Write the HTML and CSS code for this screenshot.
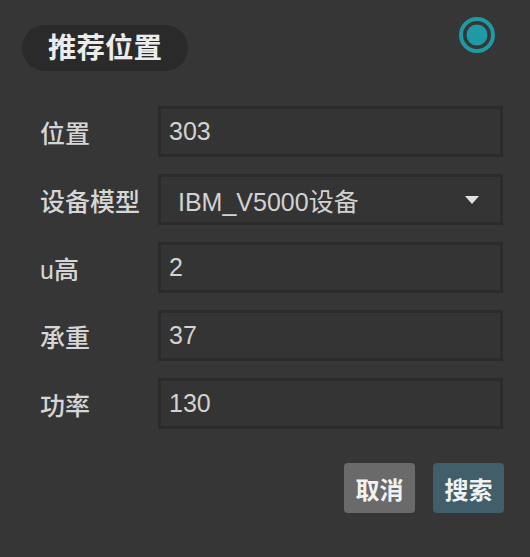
FILE: index.html
```html
<!DOCTYPE html>
<html lang="zh">
<head>
<meta charset="utf-8">
<title>推荐位置</title>
<link rel="stylesheet" href="styles.css">
</head>
<body>
<div class="panel">
  <div class="header">
    <div class="title">推荐位置</div>
    <svg class="status" width="36" height="36" viewBox="0 0 36 36" aria-hidden="true">
      <circle cx="18" cy="18" r="16" fill="none" stroke="#1f9aa5" stroke-width="4"/>
      <circle cx="18" cy="18" r="10.5" fill="#1f9aa5"/>
    </svg>
  </div>
  <div class="form">
    <label class="label">位置</label>
    <input class="field" type="text" value="303">
    <label class="label">设备模型</label>
    <div class="field select">
      <span>IBM_V5000设备</span>
      <span class="caret"></span>
    </div>
    <label class="label">u高</label>
    <input class="field" type="text" value="2">
    <label class="label">承重</label>
    <input class="field" type="text" value="37">
    <label class="label">功率</label>
    <input class="field" type="text" value="130">
  </div>
  <div class="actions">
    <button class="btn btn-cancel" type="button">取消</button>
    <button class="btn btn-search" type="button">搜索</button>
  </div>
</div>
</body>
</html>
```

FILE: styles.css
```css
html, body {
  margin: 0;
  padding: 0;
  background: #363636;
}
body {
  font-family: "Liberation Sans", "Noto Sans CJK SC", sans-serif;
  color: #d4d4d4;
  width: 530px;
  height: 557px;
  overflow: hidden;
}
.panel {
  padding: 17px 26px 0 22px;
}
.header {
  display: flex;
  justify-content: space-between;
  align-items: flex-start;
  padding-right: 9px;
}
.title {
  margin-top: 8px;
  height: 46px;
  line-height: 46px;
  padding: 0 26px;
  border-radius: 23px;
  background: #2a2a2a;
  color: #ececec;
  font-size: 28.5px;
  font-weight: bold;
}
.status {
  display: block;
}
.form {
  margin-top: 35px;
  padding-left: 18px;
  padding-right: 1px;
  display: grid;
  grid-template-columns: 118px 1fr;
  grid-auto-rows: 51px;
  row-gap: 17px;
  align-items: center;
}
.label {
  font-size: 25px;
  font-weight: 500;
  color: #d6d6d6;
}
.field {
  box-sizing: border-box;
  height: 51px;
  width: 100%;
  margin: 0;
  border: 3px solid #2b2b2b;
  background: #343434;
  color: #d2d2d2;
  font-family: inherit;
  font-size: 25px;
  padding: 0 8px;
  outline: none;
}
.select {
  display: flex;
  align-items: center;
  justify-content: space-between;
  padding: 0 21px 0 17px;
}
.caret {
  width: 0;
  height: 0;
  border-left: 7px solid transparent;
  border-right: 7px solid transparent;
  border-top: 8px solid #e2e2e2;
}
.actions {
  margin-top: 34px;
  display: flex;
  justify-content: flex-end;
  gap: 18px;
}
.btn {
  width: 71px;
  height: 50px;
  border: none;
  border-radius: 4px;
  color: #f2f2f2;
  font-family: inherit;
  font-size: 24px;
  font-weight: bold;
  padding: 0;
}
.btn-cancel {
  background: #6a6a6a;
}
.btn-search {
  background: #415f6b;
}
```
